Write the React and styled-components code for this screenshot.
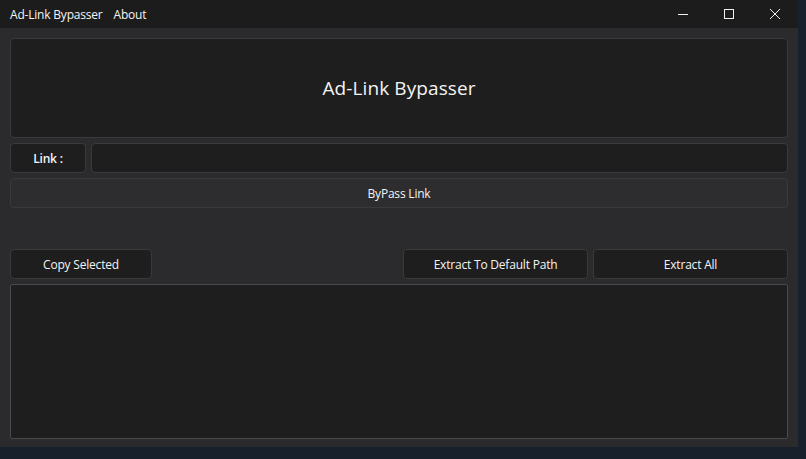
import React from 'react';
import styled, { createGlobalStyle } from 'styled-components';

const GlobalStyle = createGlobalStyle`
  html, body {
    margin: 0;
    padding: 0;
    background: #17202b;
  }
  * {
    box-sizing: border-box;
  }
`;

const Window = styled.div`
  width: 798px;
  height: 447px;
  background: #2b2b2d;
  display: flex;
  flex-direction: column;
  font-family: 'Open Sans', 'Noto Sans', sans-serif;
  color: #f4f4f4;
`;

const TitleBar = styled.div`
  height: 28px;
  background: #1c1c1c;
  display: flex;
  align-items: center;
  padding-left: 10px;
  font-size: 12px;
  letter-spacing: -0.2px;
`;

const MenuItem = styled.span`
  margin-right: 11px;
  white-space: nowrap;
`;

const Controls = styled.div`
  margin-left: auto;
  display: flex;
  height: 100%;
`;

const ControlButton = styled.div`
  width: 46px;
  height: 100%;
  display: flex;
  align-items: center;
  justify-content: center;
`;

const Body = styled.div`
  flex: 1;
  display: flex;
  flex-direction: column;
  padding: 10px 10px 8px 10px;
  gap: 5px;
`;

const Panel = styled.div`
  background: #1e1e1e;
  border: 1px solid #3a3a3c;
  border-radius: 4px;
`;

const Header = styled(Panel)`
  height: 100px;
  flex: none;
  display: flex;
  align-items: center;
  justify-content: center;
  font-size: 19px;
  letter-spacing: 0.1px;
`;

const Row = styled.div`
  display: flex;
  flex: none;
  gap: 5px;
  margin-top: ${(p) => p.$top || 0}px;
`;

const Label = styled(Panel)`
  width: 76px;
  height: 30px;
  display: flex;
  align-items: center;
  justify-content: center;
  font-size: 12px;
  font-weight: 600;
  letter-spacing: -0.2px;
`;

const Input = styled.input`
  flex: 1;
  height: 30px;
  margin: 0;
  background: #1e1e1e;
  border: 1px solid #3a3a3c;
  border-radius: 4px;
  color: #f4f4f4;
  outline: none;
`;

const Button = styled.div`
  width: ${(p) => (p.$width ? `${p.$width}px` : 'auto')};
  flex: ${(p) => (p.$width ? 'none' : 1)};
  height: 30px;
  margin-left: ${(p) => (p.$push ? 'auto' : 0)};
  background: ${(p) => (p.$flat ? '#2d2d2f' : '#1e1e1e')};
  border: 1px solid #3a3a3c;
  border-radius: 4px;
  display: flex;
  align-items: center;
  justify-content: center;
  font-size: 12px;
  letter-spacing: -0.2px;
  white-space: nowrap;
`;

const ResultList = styled.div`
  flex: 1;
  background: #1e1e1e;
  border: 1px solid #4a4a4c;
  border-radius: 2px;
`;

export default function App() {
  return (
    <>
      <GlobalStyle />
      <Window>
        <TitleBar>
          <MenuItem>Ad-Link Bypasser</MenuItem>
          <MenuItem>About</MenuItem>
          <Controls>
            <ControlButton>
              <svg width="12" height="12" viewBox="0 0 12 12">
                <line x1="1" y1="6.5" x2="11" y2="6.5" stroke="#f0f0f0" strokeWidth="1" />
              </svg>
            </ControlButton>
            <ControlButton>
              <svg width="12" height="12" viewBox="0 0 12 12">
                <rect x="1.5" y="1.5" width="9" height="9" fill="none" stroke="#f0f0f0" strokeWidth="1" />
              </svg>
            </ControlButton>
            <ControlButton>
              <svg width="12" height="12" viewBox="0 0 12 12">
                <path d="M1 1 L11 11 M11 1 L1 11" stroke="#f0f0f0" strokeWidth="1" />
              </svg>
            </ControlButton>
          </Controls>
        </TitleBar>
        <Body>
          <Header>Ad-Link Bypasser</Header>
          <Row>
            <Label>Link :</Label>
            <Input />
          </Row>
          <Row>
            <Button $flat>ByPass Link</Button>
          </Row>
          <Row $top={36}>
            <Button $width={142}>Copy Selected</Button>
            <Button $width={185} $push>Extract To Default Path</Button>
            <Button $width={195}>Extract All</Button>
          </Row>
          <ResultList />
        </Body>
      </Window>
    </>
  );
}
